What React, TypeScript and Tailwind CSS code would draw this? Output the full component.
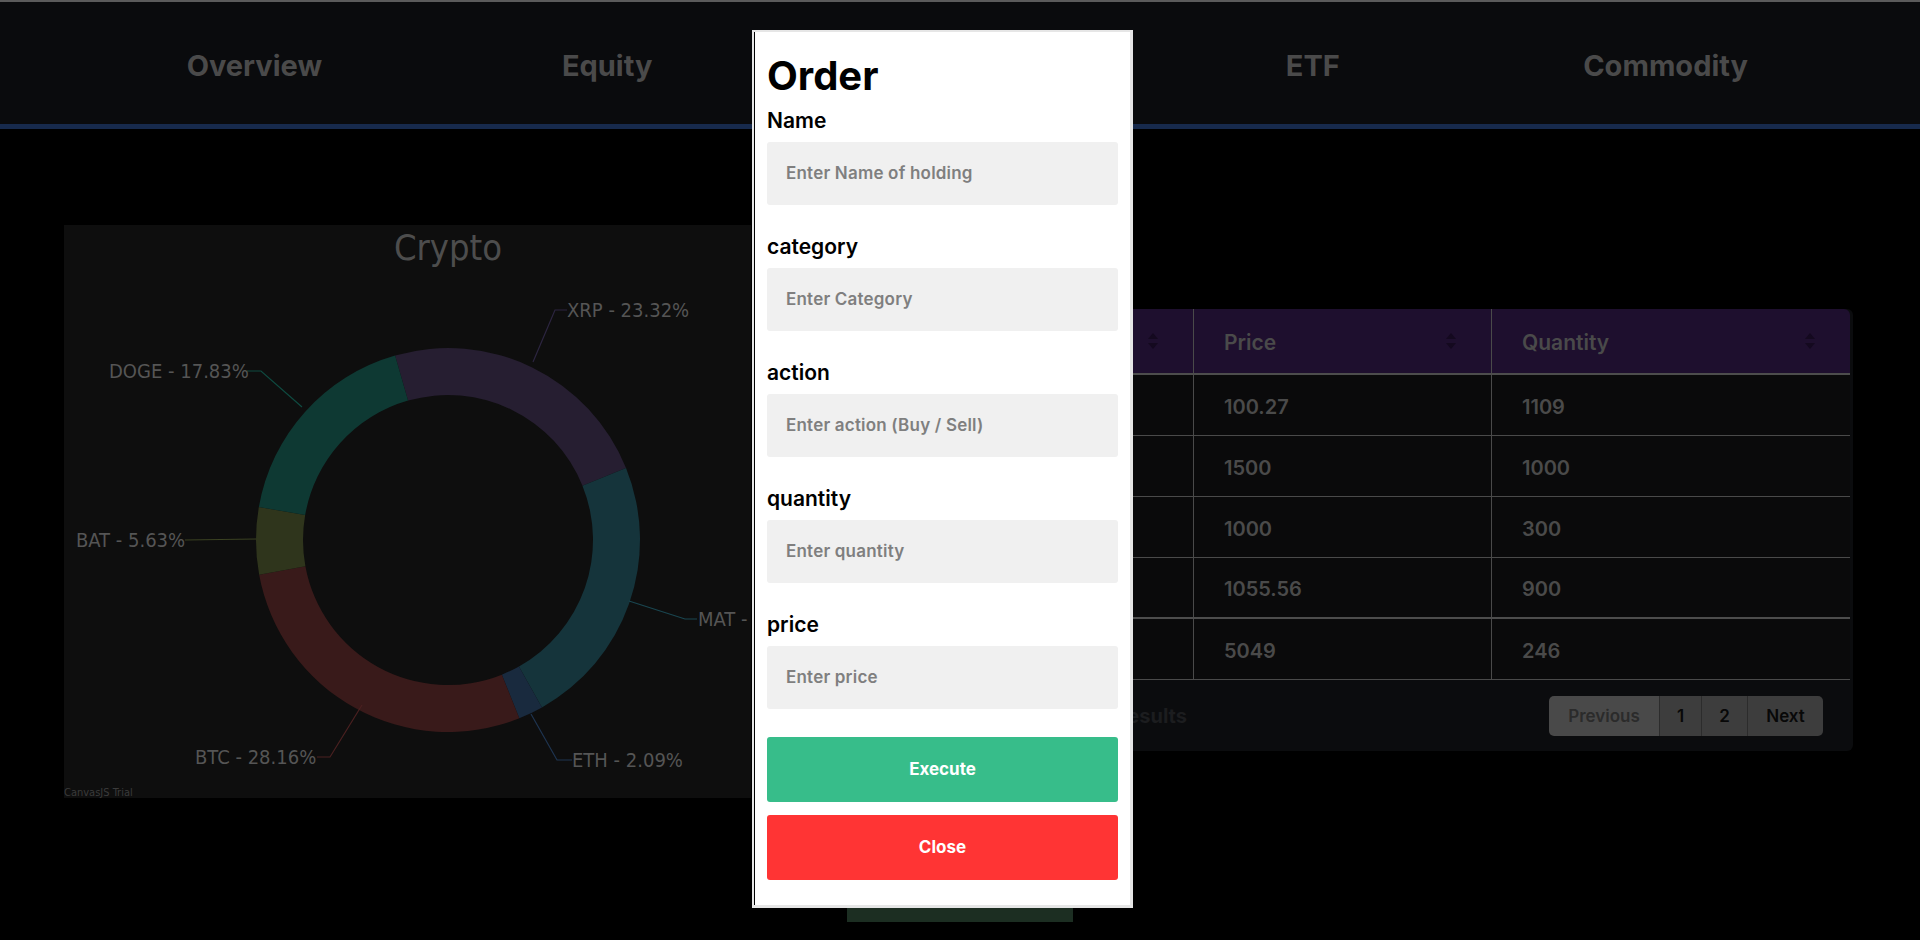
import React from "react";

const CX = 384;
const CY = 315;
const R = 192;
const RI = 145;

function pt(rad: number, deg: number) {
  const a = (deg * Math.PI) / 180;
  return [CX + rad * Math.cos(a), CY + rad * Math.sin(a)];
}

function seg(s: number, e: number) {
  const large = e - s > 180 ? 1 : 0;
  const [x1, y1] = pt(R, s);
  const [x2, y2] = pt(R, e);
  const [x3, y3] = pt(RI, e);
  const [x4, y4] = pt(RI, s);
  return `M${x1} ${y1} A${R} ${R} 0 ${large} 1 ${x2} ${y2} L${x3} ${y3} A${RI} ${RI} 0 ${large} 0 ${x4} ${y4} Z`;
}

const segments = [
  { s: -106, e: -22, c: "#261e31" },
  { s: -22, e: 60.7, c: "#15343b" },
  { s: 60.7, e: 68.2, c: "#192a3e" },
  { s: 68.2, e: 169.6, c: "#391a1a" },
  { s: 169.6, e: 189.9, c: "#2f351c" },
  { s: 189.9, e: 254, c: "#0e3933" },
];

const labels = [
  { t: "XRP - 23.32%", x: 503, y: 85, line: "469,137 491,85 503,85", c: "#2c2540" },
  { t: "DOGE - 17.83%", x: 45, y: 146, line: "183,146 197,146 238,182", c: "#0f4a40" },
  { t: "BAT - 5.63%", x: 12, y: 315, line: "121,315 192,314", c: "#3b4222" },
  { t: "BTC - 28.16%", x: 131, y: 532, line: "253,532 266,532 298,480", c: "#4a2020" },
  { t: "ETH - 2.09%", x: 508, y: 535, line: "467,489 493,535 508,535", c: "#1e3450" },
  { t: "MAT - 22.97%", x: 634, y: 394, line: "565,376 621,394 633,394", c: "#1a4650" },
];

const chartFont = { fontFamily: "'DejaVu Sans Condensed','DejaVu Sans',sans-serif", fontStretch: "condensed" as const };

function Chart() {
  return (
    <div className="w-[687px] h-[573px] bg-[#0e0e0e] shrink-0">
      <svg width="687" height="573" viewBox="0 0 687 573">
        <text x="384" y="22" textAnchor="middle" dominantBaseline="central" fill="#4d4d4d" fontSize="36" style={chartFont}>
          Crypto
        </text>
        {segments.map((s, i) => (
          <path key={i} d={seg(s.s, s.e)} fill={s.c} />
        ))}
        {labels.map((l, i) => (
          <g key={i}>
            <polyline points={l.line} fill="none" stroke={l.c} strokeWidth="1.2" />
            <text x={l.x} y={l.y} dominantBaseline="central" fill="#555555" fontSize="20" fontWeight="500" style={chartFont}>
              {l.t}
            </text>
          </g>
        ))}
        <text x="0" y="567" dominantBaseline="central" fill="#3b3b3b" fontSize="11" style={chartFont}>
          CanvasJS Trial
        </text>
      </svg>
    </div>
  );
}

function SortIcon() {
  return (
    <svg width="10" height="16" viewBox="0 0 10 16" className="shrink-0">
      <path d="M5 0 L10 6 L0 6 Z" fill="#14091f" />
      <path d="M5 16 L10 10 L0 10 Z" fill="#14091f" />
    </svg>
  );
}

const rows = [
  ["BTC", "Buy", "100.27", "1109"],
  ["ETH", "Buy", "1500", "1000"],
  ["XRP", "Sell", "1000", "300"],
  ["DOGE", "Buy", "1055.56", "900"],
  ["MAT", "Buy", "5049", "246"],
];

const cols = ["w-[200px]", "w-[193px] border-l border-[#4a4a4a]", "w-[298px] border-l border-[#4a4a4a]", "w-[359px] border-l border-[#4a4a4a]"];

function Table() {
  const heads = ["Name", "Action", "Price", "Quantity"];
  return (
    <div className="w-[1053px] ml-[49px] mt-[84px] rounded-[6px] overflow-hidden bg-[#0b0c0e] shrink-0">
      <div className="w-[1050px] rounded-tr-[6px] overflow-hidden">
        <div className="flex h-[66px] bg-[#1e0f2e] border-b-2 border-[#4d4d4d]">
          {heads.map((h, i) => (
            <div key={h} className={`${cols[i]} flex items-center justify-between pl-[30px] pr-[35px] text-[21px] font-semibold text-[#4a4a4a]`}>
              <span className="pt-[3px]">{h}</span>
              <SortIcon />
            </div>
          ))}
        </div>
        {rows.map((r, ri) => (
          <div key={ri} className={`flex h-[61px] bg-[#0a0a0b] ${ri === 3 ? "border-b-2 border-[#4d4d4d]" : "border-b border-[#4a4a4a]"}`}>
            {r.map((c, i) => (
              <div key={i} className={`${cols[i]} flex items-center pl-[30px] pt-[3px] text-[20px] font-semibold text-[#4a4a4a]`}>
                {c}
              </div>
            ))}
          </div>
        ))}
      </div>
      <div className="flex h-[71px] items-center justify-between pr-[30px]">
        <div className="w-[387px] text-right text-[20px] font-bold text-[#1c1d1f]">Showing 1 to 5 of 6 results</div>
        <div className="flex h-[40px] rounded-[5px] overflow-hidden text-[17px] font-semibold">
          <div className="w-[110px] flex items-center justify-center pt-[2px] bg-[#494949] text-[#2b2b2b]">Previous</div>
          <div className="w-[42px] flex items-center justify-center pt-[2px] bg-[#3d3d3d] text-[#080808] border-l border-[#2c2c2c]">1</div>
          <div className="w-[46px] flex items-center justify-center pt-[2px] bg-[#3d3d3d] text-[#080808] border-l border-[#2c2c2c]">2</div>
          <div className="w-[76px] flex items-center justify-center pt-[2px] bg-[#3d3d3d] text-[#080808] border-l border-[#2c2c2c]">Next</div>
        </div>
      </div>
    </div>
  );
}

function Field({ label, placeholder }: { label: string; placeholder: string }) {
  return (
    <div className="flex flex-col">
      <div className="h-[28px] leading-[28px] text-[21px] font-semibold text-black mb-[7px]">{label}</div>
      <div className="h-[63px] bg-[#f0f0f0] rounded-[3px] flex items-center pl-[19px] text-[17px] tracking-[0.2px] font-semibold text-[#7f7f7f]">
        {placeholder}
      </div>
    </div>
  );
}

function Modal() {
  return (
    <div className="absolute left-[752px] top-[30px] w-[381px] h-[878px] bg-white border-t-2 border-l-2 border-r-[3px] border-b-[3px] border-[#e6e6e6]">
      <div className="h-full border-l border-black px-3 pt-[20px]">
        <div className="h-[48px] leading-[48px] text-[40px] font-bold text-black mb-[7px]">Order</div>
        <div className="flex flex-col gap-[28px]">
          <Field label="Name" placeholder="Enter Name of holding" />
          <Field label="category" placeholder="Enter Category" />
          <Field label="action" placeholder="Enter action (Buy / Sell)" />
          <Field label="quantity" placeholder="Enter quantity" />
          <Field label="price" placeholder="Enter price" />
          <div className="flex flex-col gap-[13px]">
            <div className="h-[65px] rounded-[3px] bg-[#37bd8a] flex items-center justify-center text-white text-[17px] font-bold">Execute</div>
            <div className="h-[65px] rounded-[3px] bg-[#ff3434] flex items-center justify-center text-white text-[17px] font-bold">Close</div>
          </div>
        </div>
      </div>
    </div>
  );
}

export default function App() {
  const nav = ["Overview", "Equity", "Crypto", "ETF", "Commodity"];
  return (
    <div className="relative w-full h-[940px] bg-black overflow-hidden" style={{ fontFamily: "Inter, 'Noto Sans', sans-serif" }}>
      <div className="h-[2px] bg-[#5b5b5b]" />
      <div className="h-[122px] bg-[#0a0b0d] flex px-[78px] pt-[6px]">
        {nav.map((n) => (
          <div key={n} className="flex-1 flex items-center justify-center text-[29px] font-bold text-[#4a4a4a]">
            {n}
          </div>
        ))}
      </div>
      <div className="h-[5px] bg-[#172a4c]" />
      <div className="flex items-start pl-[64px] mt-[96px]">
        <Chart />
        <Table />
      </div>
      <div className="flex justify-center mt-[74px]">
        <div className="w-[226px] h-[50px] bg-[#1c2e22]" />
      </div>
      <Modal />
    </div>
  );
}
